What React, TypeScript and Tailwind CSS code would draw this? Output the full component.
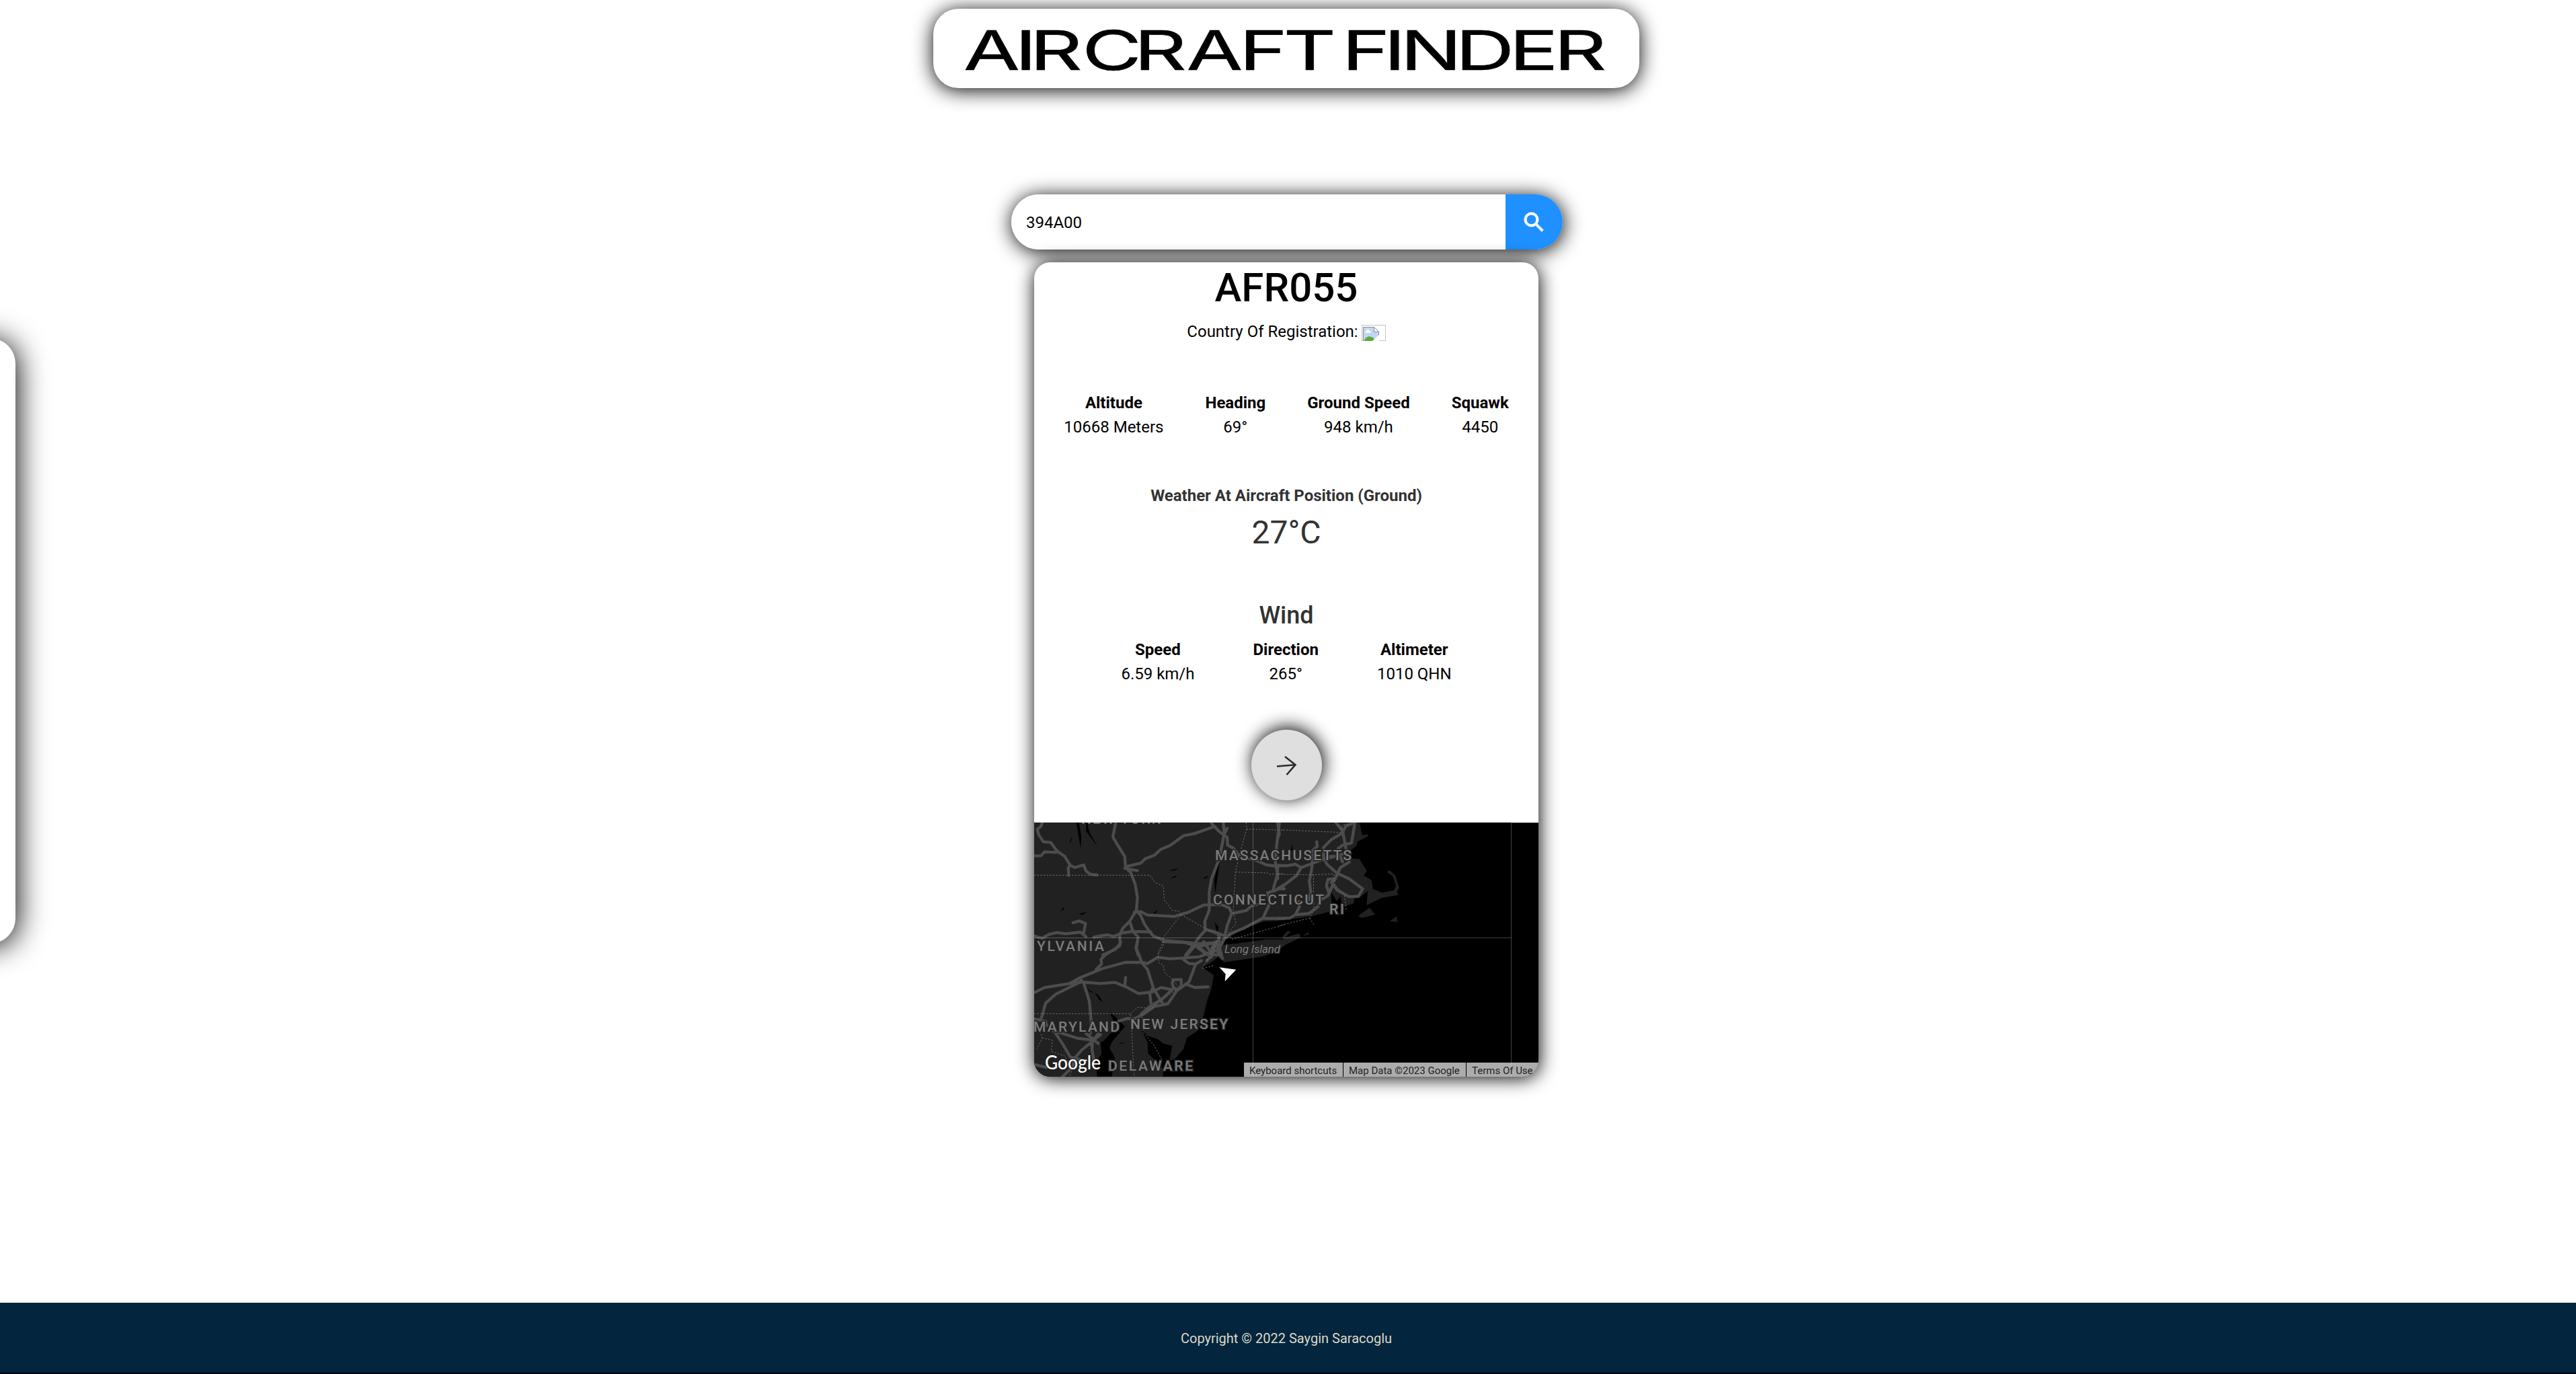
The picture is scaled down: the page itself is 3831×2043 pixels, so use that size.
import React from "react";

const flight = [
  ["Altitude", "10668 Meters"],
  ["Heading", "69°"],
  ["Ground Speed", "948 km/h"],
  ["Squawk", "4450"],
];

const wind = [
  ["Speed", "6.59 km/h"],
  ["Direction", "265°"],
  ["Altimeter", "1010 QHN"],
];

function Stats({ items, gap }: { items: string[][]; gap: string }) {
  return (
    <div className={`flex justify-center text-[24px] leading-[36px] text-black ${gap}`}>
      {items.map(([label, value]) => (
        <div key={label} className="flex flex-col items-center whitespace-nowrap">
          <span className="font-bold">{label}</span>
          <span>{value}</span>
        </div>
      ))}
    </div>
  );
}

function Title() {
  return (
    <svg width="1050" height="118" viewBox="0 0 1050 118" role="img" aria-label="Aircraft Finder">
      <text
        transform="translate(0 90.5) scale(1.5 1)"
        x="30 80.9 95.7 147.5 199 251 303.3 347 395 405 446.7 463 517.7 571 615.3"
        y="0"
        fontSize="81"
        fill="#000"
        stroke="#000"
        strokeWidth="0.6"
        className="font-['Inter']"
      >
        AIRCRAFT FINDER
      </text>
    </svg>
  );
}

function BrokenImage() {
  return (
    <svg width="36" height="24" viewBox="0 0 36 24">
      <rect x="0.5" y="0.5" width="35" height="23" fill="#fff" stroke="#c4c4c4" />
      <path d="M2.5 24V3.500h16l7 7V24z" fill="#c3d5f6" stroke="#8c8c8c" />
      <path d="M18.500 3.500v7h7z" fill="#fff" stroke="#8c8c8c" />
      <path d="M5 12c0-2 2-2 2-3 1-3 4-3 5 0 1 0 2 1 2 3z" fill="#fff" />
      <path d="M4 24c1-5 6-8 10-6 2 0 4 2 5 3l-2 3z" fill="#57ab3b" />
      <path d="M16 24l10-9v9z" fill="#fff" />
    </svg>
  );
}

const land =
  "M0 0H1451L1464 56L1491 53L1486 63L1441 86V101L1414 123L1416 161L1451 163L1484 216L1471 236L1506 258L1511 296L1551 313L1606 303L1614 281L1601 241L1574 221L1586 213L1611 236L1629 291L1618 309L1626 323L1551 336L1483 369L1488 306L1451 336L1428 339L1426 361L1376 376L1366 331L1350 350L1326 311V396L1246 416L1186 426L1086 439L1026 441L926 476L856 521L836 561L830 590L800 618L751 646L801 681L791 741L771 796L756 861L726 931L681 961L666 1011L626 1056L604 1061L616 996L576 986L551 966L506 951L476 921L486 941L506 981L508 1031L546 1066L576 1101L574 1134H346L361 1051L336 1006L346 981L370 940L416 896L380 925L350 940L336 961L296 981L301 1031L276 1071L281 1134H0Z";

const roadsWest = [
  "M60 39L55 55L38 70L45 95L65 125L98 128L125 165L160 190L185 230L205 240L245 228L255 255L275 270L305 273",
  "M24 188L55 187L70 170L125 172",
  "M185 230L176 240L178 275",
  "M388 39L375 103L400 145L428 190L432 240L455 262L475 315L485 375L480 430L500 455L515 490L535 520L555 545L605 565L720 575L750 580L830 575",
  "M428 243L485 254M435 235L500 220L520 200L560 185L590 158L630 142L690 98L740 88L820 60",
  "M815 42L845 75L870 95L885 65M868 39L872 90L860 150L850 200L815 290L805 350L805 430L785 480L788 520L760 550L740 580L700 630",
  "M868 90L885 105L887 140L915 155L940 190L1020 210L1060 228L1105 234L1140 230",
  "M1118 39L1105 150L1100 215L1110 270L1095 320L1090 345L1065 352L1075 400L1045 465L960 510L900 535L870 560L850 600L860 630",
  "M1140 320L1095 345M1045 467H1140",
  "M470 440L500 437L530 452L650 458L710 440L780 407L860 405L895 420L905 445L970 432L995 410L1020 405",
  "M905 445L885 500L875 545L830 527L785 515",
  "M480 430L450 480L420 510L405 540L408 580L385 605L330 630",
  "M450 480L465 525L488 550L478 600L488 630M410 533L460 525L545 527",
  "M24 545L60 555L90 538L125 530L165 535L230 528L255 548M245 530L253 490L225 478L197 486",
  "M290 550L350 540L380 547L420 530M740 580L790 620L835 630M850 540L845 630M830 575L800 630M740 580L770 590L850 570",
];

const roadsEast = [
  "M345 39L330 130L290 140L270 155M260 39L290 75L305 155M290 85L240 115L205 150V190L220 225L265 265L320 290L380 335L360 368L320 370L265 340L240 305L255 295L280 240L320 215",
  "M345 39L305 55L285 90M0 230L40 232L80 225L105 240L200 205L290 180M175 125L177 145L155 165V220L150 260L142 300L148 350L140 385",
  "M105 240L85 275L40 310L0 335H30M0 39L8 90L0 110M0 240V290",
  "M0 467L55 465L80 450L140 445L180 415L190 385L225 365L245 320M80 450L97 415V390",
  "M255 290L225 292L218 320L230 355M235 190H255M290 215L280 190",
];

const roadsSouth = [
  "M410 0L405 20L340 60L322 80L325 100L300 125",
  "M24 228L70 205L180 188L230 180L320 187L385 182L440 205L490 232L550 225L590 205L640 215",
  "M180 188L225 163L330 120L430 93H505L530 98L575 70L630 77L695 73L760 68L805 50L840 10",
  "M485 0L480 30L505 95L530 125L555 205L590 265L600 278",
  "M228 165L245 185L270 265L278 350L275 410M230 180L180 205L120 235L75 275L60 330L50 350H24",
  "M555 205L540 230L545 275M432 160L428 200",
  "M745 100L715 180L660 220L620 278L560 290L510 325L470 345L440 343L400 355M640 215L590 260L540 290L500 325M700 190L740 205L800 202",
  "M645 170H680V200L665 215L645 205L640 185ZM600 0L700 5L745 20L790 55M740 20L690 80L715 98L745 100L770 85M780 0L820 60L795 85",
  "M840 0L845 50L865 75M790 55L855 35M835 0L815 70",
  "M110 400L150 410L220 432L290 440L320 415M120 410L150 455L185 515L240 530M290 440L235 485L205 520L195 560L150 603M285 430L282 480L290 530M255 410L310 455M310 410L275 460M24 548L80 562M24 345L75 355L80 375",
];

const labels: [string, number, number, number][] = [
  ["NEW YORK", 70, 2, 118],
  ["MASSACHUSETTS", 269, 56, 203],
  ["CONNECTICUT", 266, 122, 165],
  ["RI", 439, 135.5, 22],
  ["YLVANIA", 4, 191, 100],
  ["MARYLAND", -1, 310.500, 128],
  ["NEW JERSEY", 143, 306.500, 145],
  ["DELAWARE", 110, 369, 126],
];

function FlightMap() {
  return (
    <svg width="750" height="378" viewBox="0 0 750 378" className="block bg-black font-['Roboto']">
      <g transform="scale(0.33333)">
        <path d={land} fill="#212121" />
        <path
          d="M821 600L841 546L906 539L1036 521L1116 521L1106 511L1131 483L1146 486L1120 512L1181 496L1191 511L1121 546L1080 575L1020 598L881 619L846 623ZM1446 416L1496 381L1521 411L1461 426ZM1586 441L1616 419L1622 443ZM1199 506L1224 488L1226 498Z"
          fill="#212121"
        />
        <path
          d="M188 0L208 116L210 60L200 0ZM232 0V40L283 107L250 50L240 20L245 0ZM156 95L167 62L166 80ZM600 215L645 203L625 215ZM608 250L638 233L628 245ZM752 252L776 236L770 248ZM808 315L828 172L815 200L804 260ZM118 395L134 375L132 388ZM200 408L236 398L215 412ZM530 407L552 388L542 404ZM805 445L822 465L818 500ZM225 725L250 750L285 768L308 802L290 790L270 760L250 755ZM336 845L365 870L405 910L345 980L300 985L345 935L370 920ZM380 985L410 979L390 987ZM495 855L515 825L530 820ZM1144 130L1152 96L1154 125Z"
          fill="#000"
        />
        <g fill="none" stroke="#4c4c4c" strokeWidth="13" strokeLinejoin="round" strokeLinecap="round">
          <g transform="translate(-24 -39)">{roadsWest.map((d) => <path key={d} d={d} />)}</g>
          <g transform="translate(1086 -39)">{roadsEast.map((d) => <path key={d} d={d} />)}</g>
          <g transform="translate(-24 531)">{roadsSouth.map((d) => <path key={d} d={d} />)}</g>
        </g>
        <g fill="none" stroke="#707070" strokeWidth="3" strokeDasharray="7 7">
          <path
            transform="translate(-24 -39)"
            d="M24 274H540L565 308L600 322L605 385L640 430L670 435L680 450L640 500L600 550V590L575 630M680 450L845 545L830 600L815 630M970 39L972 68L1140 73M972 68L935 200L922 262L912 440L925 490L890 530L905 560L1140 495M922 260L1065 264L1070 270L1140 267"
          />
          <path
            transform="translate(1086 -39)"
            d="M0 270L160 272L250 268L255 315L298 360L307 435M160 272L162 430L143 465L5 500M143 465L163 497M25 72L280 83L290 50L320 45"
          />
          <path
            transform="translate(-24 531)"
            d="M24 322H455L470 603M600 0L577 50L580 95L600 105L605 135L650 180L670 205L570 280L505 330L510 405L560 465L595 530M455 322L485 293L530 297M775 120L830 105M830 0L805 70L775 115M50 400L60 430L35 480M60 430L105 440L100 490L160 510L195 570L180 603"
          />
        </g>
      </g>
      <g fill="none" stroke="#fff" strokeOpacity="0.25">
        <path d="M325.5 0V378M709.5 0V378M0 171.500H709.500M710 0.5H750" />
      </g>
      <g fontSize="21" fontWeight="500" fill="#7c7c7c" stroke="#212121" strokeWidth="3" paintOrder="stroke">
        {labels.map(([name, x, y, w]) => (
          <text key={name} x={x} y={y} textLength={w}>
            {name}
          </text>
        ))}
        <text x="283" y="194" textLength="83" fontSize="17" fontStyle="italic" fontWeight="400">
          Long Island
        </text>
      </g>
      <path transform="translate(-8 177) scale(0.33333)" d="M850 115L925 125L875 178L878 145Z" fill="#fff" />
      <text
        x="16"
        y="366.5"
        textLength="83"
        lengthAdjust="spacingAndGlyphs"
        fontSize="28"
        fontWeight="500"
        fill="#fff"
        stroke="#222"
        strokeWidth="2"
        paintOrder="stroke"
        className="font-['Lato']"
      >
        Google
      </text>
    </svg>
  );
}

export default function App() {
  return (
    <div className="relative flex h-[2043px] w-[3831px] flex-col overflow-hidden bg-white font-['Roboto',sans-serif]">
      <aside className="absolute top-[503px] -left-[477px] h-[900px] w-[500px] rounded-[37.5px] bg-white shadow-[2px_3px_45px_#000]" />

      <main className="flex h-[1937px] flex-col items-center pt-[13px] pr-[5px]">
        <h1 className="h-[118px] w-[1050px] rounded-[37.5px] bg-white shadow-[0_3px_30px_#000]">
          <Title />
        </h1>

        <form className="mt-[158px] ml-[2px] flex h-[82px] w-[820px] shrink-0 overflow-visible rounded-full bg-white shadow-[1px_3px_30px_#000]">
          <input
            readOnly
            value="394A00"
            className="h-full w-[735px] rounded-l-full bg-white pt-[2px] pl-[22px] text-[24px] text-black outline-none"
          />
          <button type="button" className="flex flex-1 items-center justify-center rounded-r-full bg-[#1e90ff]">
            <svg width="39" height="39" viewBox="0 0 24 24" fill="#fff" stroke="#fff" strokeWidth="0.6">
              <path d="M15.5 14h-.79l-.28-.27A6.471 6.471 0 0 0 16 9.500 6.500 6.500 0 1 0 9.500 16c1.610 0 3.090-.59 4.230-1.570l.27.28v.79l5 4.990L20.490 19l-4.990-5zm-6 0C7.010 14 5 11.990 5 9.500S7.010 5 9.500 5 14 7.010 14 9.500 11.990 14 9.500 14z" />
            </svg>
          </button>
        </form>

        <section className="relative mt-[19px] flex h-[1211px] w-[750px] shrink-0 flex-col items-center overflow-visible rounded-[24px] bg-white shadow-[1px_2px_28px_#000]">
          <h2 className="mt-[2px] text-[60px] leading-[72px] font-medium text-black">AFR055</h2>
          <div className="mt-[11px] flex h-[36px] gap-[5px] text-[24px] leading-[36px] text-black">
            <span>Country Of Registration:</span>
            <span className="pt-[8px]">
              <BrokenImage />
            </span>
          </div>
          <div className="mt-[70px]">
            <Stats items={flight} gap="gap-[62px]" />
          </div>
          <h3 className="mt-[66px] text-[24px] leading-[36px] font-bold text-[#333]">
            Weather At Aircraft Position (Ground)
          </h3>
          <p className="mt-[8px] text-[48px] leading-[58px] text-[#333]">27°C</p>
          <h3 className="mt-[73px] text-[36px] leading-[43px] font-medium text-[#333]">Wind</h3>
          <div className="mt-[11px]">
            <Stats items={wind} gap="gap-[87px]" />
          </div>
          <div className="mt-[65px] flex size-[105px] items-center justify-center rounded-full bg-[#dfdfdf] shadow-[2px_-3px_27px_#000]">
            <svg width="34" height="34" viewBox="0 0 34 34" fill="none" stroke="#2d2d2d" strokeWidth="2.600">
              <path d="M3 18.500L30 16.200M15 4L30.500 16.200L17.500 31" />
            </svg>
          </div>
          <div className="relative mt-[33px] h-[378px] w-[750px] overflow-hidden rounded-b-[24px]">
            <FlightMap />
            <div className="absolute right-0 bottom-0 flex h-[21px] w-[438px] bg-[#f5f5f5]/70 text-[15px] leading-[25px] whitespace-nowrap text-[#222]">
              <span className="w-[147px] pl-[8px]">Keyboard shortcuts</span>
              <span className="w-[183px] border-l border-black pl-[8px]">Map Data ©2023 Google</span>
              <span className="border-l border-black pl-[8px]">Terms Of Use</span>
            </div>
          </div>
        </section>
      </main>

      <footer className="flex h-[106px] items-center justify-center border-b-2 border-black bg-[#03253d] pt-[2px] pr-[5px] text-[20px] leading-[30px] text-[#dcd9c9]">
        Copyright © 2022 Saygin Saracoglu
      </footer>
    </div>
  );
}
